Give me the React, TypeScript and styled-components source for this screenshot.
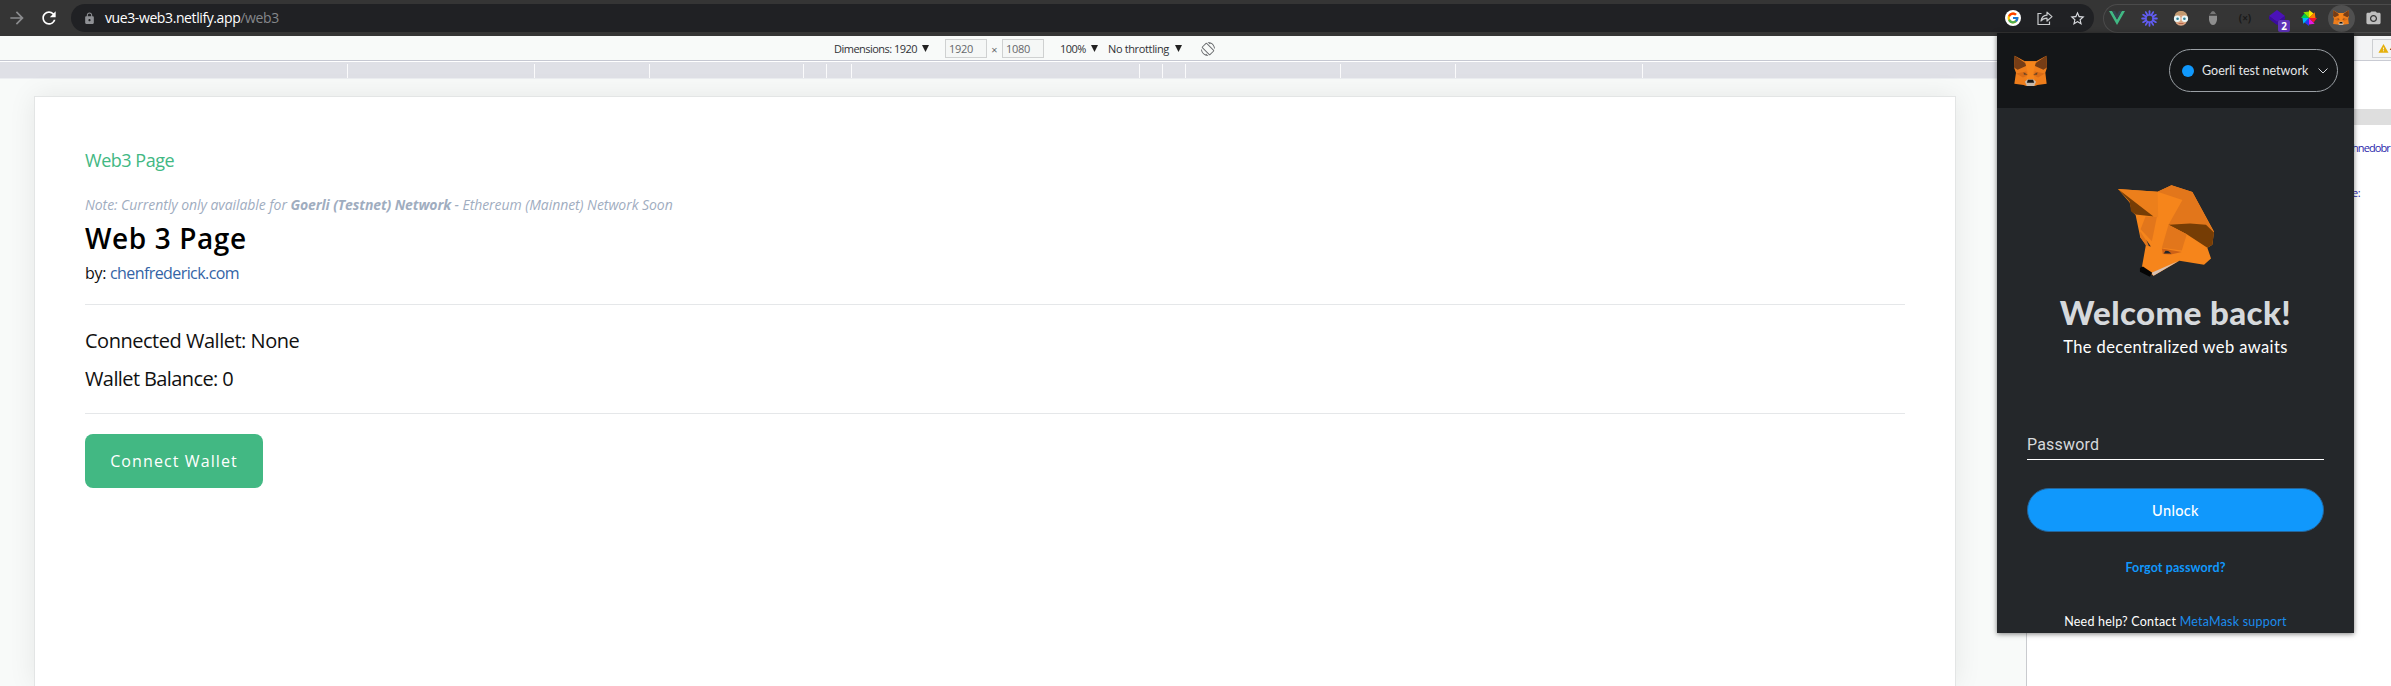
import React from "react";
import styled, { createGlobalStyle } from "styled-components";
import { MdArrowForward, MdRefresh, MdLock, MdStarBorder, MdPhotoCamera, MdScreenRotation, MdWarning } from "react-icons/md";
import { FcGoogle } from "react-icons/fc";

const GlobalStyle = createGlobalStyle`
  *, *::before, *::after { box-sizing: border-box; }
  body { margin: 0; overflow: hidden; background: #fff; font-family: "Open Sans", "Noto Sans", sans-serif; }
  p, h1, h2 { margin: 0; }
  svg { display: block; flex: none; }
`;

const Screen = styled.div`
  position: relative;
  display: flex;
  flex-direction: column;
  width: 2391px;
  height: 686px;
  overflow: hidden;
`;

/* ---------- browser toolbar ---------- */
const BrowserBar = styled.header`
  display: flex;
  align-items: center;
  flex: none;
  height: 36px;
  padding-left: 1px;
  background: #353535;
`;
const IconCell = styled.span<{ $color?: string }>`
  position: relative;
  display: flex;
  align-items: center;
  justify-content: center;
  flex: none;
  width: 32px;
  height: 28px;
  color: ${(p) => p.$color ?? "#dadce0"};
`;
const Omnibox = styled.div`
  display: flex;
  align-items: center;
  width: 2023px;
  height: 28px;
  margin-left: 6px;
  padding: 0 1px 0 12px;
  border-radius: 14px;
  background: #202124;
  color: #8f9195;
`;
const Address = styled.span`
  flex: 1;
  margin-left: 9px;
  font-size: 14px;
  line-height: 28px;
  letter-spacing: -0.4px;
  color: #85878b;
  b { font-weight: 400; color: #fff; }
`;
const Extensions = styled.div`
  display: flex;
  align-items: center;
  flex: 1;
  height: 29px;
  margin-left: 9px;
  border: 1px solid #4b4b4b;
  border-right: 0;
  border-radius: 15px 0 0 15px;
  & > :first-child { margin-left: -3px; }
`;
const ActiveDisc = styled.span`
  display: flex;
  align-items: center;
  justify-content: center;
  flex: none;
  width: 27px;
  height: 27px;
  border-radius: 50%;
  background: #505050;
`;
const Badge = styled.span`
  position: absolute;
  left: 17px;
  top: 16px;
  width: 12px;
  height: 12px;
  border-radius: 2px;
  background: #5f33b8;
  color: #fff;
  font: 700 10px/12px "Open Sans", sans-serif;
  text-align: center;
`;
const Code = styled.span`
  font: 700 10px/12px "Open Sans", sans-serif;
  color: #191919;
`;

/* ---------- emulated device ---------- */
const Workspace = styled.div`
  display: flex;
  flex: 1;
  min-height: 0;
`;
const DevicePane = styled.section`
  display: flex;
  flex-direction: column;
  width: 2026px;
  flex: none;
  overflow: hidden;
  background: #f8faf9;
`;
const DeviceBar = styled.div`
  display: flex;
  align-items: center;
  flex: none;
  height: 25px;
  padding: 1px 0 0 834px;
  border-bottom: 1px solid #c6c8d2;
  font-size: 11px;
  line-height: 18px;
  color: #303236;
  white-space: nowrap;
`;
const BarText = styled.span<{ $w: number; $ls: number; $before?: number }>`
  width: ${(p) => p.$w}px;
  margin-left: ${(p) => p.$before ?? 0}px;
  letter-spacing: ${(p) => p.$ls}px;
`;
const Caret = styled.i<{ $after: number }>`
  width: 7px;
  height: 7px;
  margin-right: ${(p) => p.$after}px;
  background: #222;
  clip-path: polygon(0 0, 100% 0, 50% 100%);
`;
const SizeField = styled.span`
  width: 42px;
  height: 19px;
  padding-left: 3px;
  border: 1px solid #cfd1d1;
  background: #f5f7f6;
  color: #66686b;
  letter-spacing: -0.3px;
  line-height: 17px;
`;
const Times = styled.span`
  width: 15px;
  padding-top: 2px;
  text-align: center;
  color: #66686b;
`;
const Ruler = styled.div`
  display: flex;
  flex: none;
  height: 18px;
  padding-top: 2px;
  border-top: 1px solid #fff;
  border-bottom: 1px solid #eceef1;
  background: #dfe0e6;
`;
const RulerStep = styled.span<{ $w: number }>`
  flex: none;
  width: ${(p) => p.$w}px;
  border-right: 1px solid #fbfbfc;
`;
const Page = styled.main`
  display: flex;
  flex-direction: column;
  align-items: flex-start;
  flex: 1;
  margin: 17px 70px 0 34px;
  padding: 51px 50px 0;
  border: 1px solid #e3e5e5;
  border-bottom: 0;
  background: #fff;
  box-shadow: 0 0 26px rgba(0, 0, 0, 0.08);
`;
const Crumb = styled.p`
  font-size: 18px;
  line-height: 24px;
  letter-spacing: -0.48px;
  color: #42b883;
`;
const Note = styled.p`
  margin-top: 23px;
  font-size: 14px;
  font-style: italic;
  line-height: 20px;
  letter-spacing: -0.06px;
  color: #9fadbf;
  b { letter-spacing: -0.12px; }
`;
const Title = styled.h1`
  margin-top: 3px;
  font-size: 28px;
  font-weight: 600;
  line-height: 40px;
  letter-spacing: 0.6px;
  color: #000;
`;
const Byline = styled.p`
  margin-top: 3px;
  font-size: 16px;
  line-height: 24px;
  letter-spacing: -0.3px;
  color: #111;
`;
const PageLink = styled.a`
  letter-spacing: -0.58px;
  color: #3464a6;
`;
const Rule = styled.hr<{ $top: number; $bottom: number }>`
  width: 100%;
  height: 1px;
  margin: ${(p) => p.$top}px 0 ${(p) => p.$bottom}px;
  border: 0;
  background: #e5e7e9;
`;
const Fact = styled.p<{ $ls: number }>`
  font-size: 20px;
  line-height: 38px;
  letter-spacing: ${(p) => p.$ls}px;
  color: #111;
`;
const ConnectButton = styled.button`
  width: 178px;
  height: 54px;
  padding: 0;
  border: 0;
  border-radius: 8px;
  background: #42b883;
  color: #fff;
  font: 500 16px/54px "Open Sans", sans-serif;
  letter-spacing: 1.1px;
`;

/* ---------- developer tools ---------- */
const DevTools = styled.aside`
  display: flex;
  flex-direction: column;
  align-items: flex-end;
  flex: 1;
  border-left: 1px solid #c9cbcf;
  background: #fff;
  color: #2a27ab;
  font-size: 11px;
  line-height: 16px;
`;
const ToolsTabs = styled.div`
  display: flex;
  align-items: center;
  justify-content: flex-end;
  width: 100%;
  height: 25px;
  border-bottom: 1px solid #c9cbd3;
  background: #f3f4f5;
`;
const IssueChip = styled.span`
  display: flex;
  align-items: center;
  width: 19px;
  height: 19px;
  padding-left: 5px;
  border: 1px solid #cdcfd2;
  border-right: 0;
  color: #e5b00d;
  overflow: hidden;
`;
const IssueCount = styled.span`
  margin-left: 1px;
  color: #222;
`;
const ToolsHeading = styled.div`
  width: 100%;
  height: 16px;
  margin-top: 48px;
  background: #dedede;
`;
const ToolsLine = styled.div<{ $top: number; $ls: number }>`
  width: 39px;
  margin-top: ${(p) => p.$top}px;
  letter-spacing: ${(p) => p.$ls}px;
  white-space: nowrap;
`;

/* ---------- wallet popup ---------- */
const Popup = styled.section`
  position: absolute;
  left: 1997px;
  top: 33px;
  display: flex;
  flex-direction: column;
  width: 357px;
  height: 600px;
  background: #24272a;
  box-shadow: 0 1px 5px rgba(0, 0, 0, 0.5);
  font-family: Lato, sans-serif;
  color: #fff;
`;
const PopupHeader = styled.header`
  display: flex;
  align-items: center;
  justify-content: space-between;
  flex: none;
  height: 75px;
  padding: 0 16px 0 17px;
  background: #141618;
`;
const Network = styled.div`
  display: flex;
  align-items: center;
  width: 169px;
  height: 43px;
  padding-left: 12px;
  border: 1px solid #9ba0a5;
  border-radius: 22px;
  font-size: 12.5px;
  color: #e4e6e8;
`;
const NetworkDot = styled.i`
  width: 12px;
  height: 12px;
  margin-right: 8px;
  border-radius: 50%;
  background: #1098fc;
`;
const NetworkName = styled.span`
  width: 116px;
  line-height: 16px;
  white-space: nowrap;
`;
const PopupBody = styled.div`
  display: flex;
  flex-direction: column;
  align-items: center;
  padding: 0 30px;
`;
const Mascot = styled.svg`
  align-self: flex-start;
  width: 98px;
  height: 93px;
  margin: 77px 0 0 90px;
`;
const Welcome = styled.h2`
  margin-top: 14px;
  font-size: 33px;
  font-weight: 900;
  line-height: 40px;
  letter-spacing: 0.4px;
  color: #d6d9dc;
  white-space: nowrap;
`;
const Tagline = styled.p`
  margin-top: 3px;
  font-size: 16.5px;
  line-height: 24px;
  letter-spacing: 0.4px;
`;
const PasswordField = styled.div`
  width: 100%;
  height: 27px;
  margin-top: 74px;
  border-bottom: 1px solid #fff;
  font: 400 16px/24px Roboto, sans-serif;
  letter-spacing: 0.2px;
  color: #d6d9dc;
`;
const UnlockButton = styled.button`
  width: 297px;
  height: 44px;
  margin-top: 28px;
  padding: 0;
  border: 1px solid #24659b;
  border-radius: 22px;
  background: #1098fc;
  color: #fff;
  font: 500 14.5px/41px Lato, sans-serif;
  letter-spacing: 0.35px;
`;
const Forgot = styled.a`
  margin-top: 26px;
  font-size: 12.5px;
  font-weight: 700;
  line-height: 20px;
  letter-spacing: 0.1px;
  color: #1098fc;
`;
const Help = styled.p`
  margin-top: 34px;
  font-size: 12.5px;
  line-height: 20px;
  letter-spacing: 0.22px;
  a { color: #1b8cec; }
`;

const FoxHead = ({ size }: { size: number }) => (
  <svg width={size} height={size * 0.96} viewBox="161 162 100 96">
    <path d="M163 164L194 181H228L259 164L261 200L256 216L260 249L232 253L224 256H198L190 253L162 249L167 216L161 200Z" fill="#ee7d1b" />
    <path d="M163 164L204 192L172 207L161 200ZM259 164L218 192L250 207L261 200Z" fill="#763d16" />
    <path d="M194 181H228L219 217L224 236H198L203 217Z" fill="#f6851b" />
    <path d="M167 218L198 212L201 224L188 230ZM255 218L224 212L221 224L234 230Z" fill="#d96c17" />
    <path d="M190 214L203 222L191 222ZM232 214L219 222L231 222Z" fill="#6b4526" />
    <path d="M194 243L201 236H221L228 243L222 256H200Z" fill="#c8b9aa" />
    <path d="M203 237H219L222 246H200Z" fill="#161616" />
  </svg>
);

const FoxMascot = () => (
  <Mascot viewBox="470 195 295 280">
    <path d="M473 207L592 215L634 196L697 216L762 335L757 375L742 384L753 416L732 435L658 423L580 468L545 442L557 375L540 352L526 285L515 275L508 248Z" fill="#f6851b" />
    <path d="M473 207L592 215L594 292L580 290Z" fill="#ec7f1b" />
    <path d="M473 207L580 290L526 284L512 274L508 245Z" fill="#763d05" />
    <path d="M592 215L634 196L697 216L762 338L738 315L625 315L667 240Z" fill="#e2761b" />
    <path d="M625 315L690 311L738 315L762 338L757 375L742 384L680 343Z" fill="#763d05" />
    <path d="M625 315L680 343L665 392L605 384Z" fill="#e2761b" />
    <path d="M556 290L590 291L575 364L541 328Z" fill="#e2761b" />
    <path d="M540 335L558 362L572 382L557 377L540 352Z" fill="#e2761b" />
    <path d="M558 360L572 380L566 379Z" fill="#24272a" />
    <path d="M605 386L665 397L632 404L608 403Z" fill="#cd6116" />
    <path d="M611 401L616 393L624 394L634 401Z" fill="#24272a" />
    <path d="M574 459L655 424L580 468Z" fill="#d7c1b3" />
    <path d="M539 445L548 440L576 459L569 471L539 456Z" fill="#050505" />
  </Mascot>
);

const rulerSteps = [348, 187, 115, 154, 23, 25, 288, 23, 23, 155, 115, 187];

export default function App() {
  return (
    <Screen>
      <GlobalStyle />
      <BrowserBar>
        <IconCell $color="#8b8c8e"><MdArrowForward size={20} /></IconCell>
        <IconCell $color="#fff"><MdRefresh size={20} /></IconCell>
        <Omnibox>
          <MdLock size={13} />
          <Address><b>vue3-web3.netlify.app</b>/web3</Address>
          <IconCell>
            <svg width="16" height="16" viewBox="0 0 16 16"><circle cx="8" cy="8" r="8" fill="#fff" /><FcGoogle x="1.500" y="1.500" size={13} /></svg>
          </IconCell>
          <IconCell>
            <svg width="16" height="16" viewBox="0 0 16 16" fill="none" stroke="#c8cacc" strokeWidth="1.200">
              <path d="M4.500 3.500H1V14.500H12.500V11.500" />
              <path d="M4 11C4.500 7.500 6.500 5.500 10 5.200V2.200L15 6.600L10 11V8.200C7.300 8.200 5.500 9 4 11Z" strokeLinejoin="round" />
            </svg>
          </IconCell>
          <IconCell><MdStarBorder size={17} /></IconCell>
        </Omnibox>
        <Extensions>
          <IconCell>
            <svg width="16" height="14" viewBox="0 0 16 14"><path d="M0 0H3.200L8 8.500L12.800 0H16L8 14Z" fill="#41b883" /><path d="M3.200 0H6L8 3.600L10 0H12.800L8 8.500Z" fill="#34424e" /></svg>
          </IconCell>
          <IconCell>
            <svg width="17" height="17" viewBox="-9 -9 18 18" stroke="#625df5" strokeWidth="1.900" strokeLinecap="round">
              {Array.from({ length: 12 }, (_, i) => <path key={i} d="M0 -4V-7.800" transform={`rotate(${i * 30})`} />)}
              <circle r="3.800" fill="none" strokeWidth="1.500" />
            </svg>
          </IconCell>
          <IconCell>
            <svg width="16" height="15" viewBox="0 0 16 15">
              <ellipse cx="8" cy="7.500" rx="6.500" ry="7.300" fill="#d9a684" />
              <path d="M1.500 6C2 1.500 5 0 8 0S14 1.500 14.500 6L11 4H5Z" fill="#c39a70" />
              <circle cx="4.200" cy="7.700" r="3.300" fill="#e9f6f7" /><circle cx="11.800" cy="7.700" r="3.300" fill="#e9f6f7" />
              <circle cx="4.600" cy="7.800" r="1.300" fill="#2e7f95" /><circle cx="11.400" cy="7.800" r="1.300" fill="#2e7f95" />
              <path d="M5.500 12.500H10.500" stroke="#b8664c" />
            </svg>
          </IconCell>
          <IconCell>
            <svg width="8" height="14" viewBox="0 0 8 14"><path d="M1 3Q4 -3 7 3Z" fill="#777" /><path d="M0 4.500H8V9Q7 14 4 14T0 9Z" fill="#8e8e8e" /><path d="M0 3.500H8V5H0Z" fill="#4e4e4e" /></svg>
          </IconCell>
          <IconCell><Code>(×)</Code></IconCell>
          <IconCell>
            <svg width="18" height="16" viewBox="0 0 18 16"><path d="M9 0L17 6L9 12L1 6Z" fill="#4b12b8" /><path d="M1 6L9 12L17 6V9L9 15L1 9Z" fill="#3a0ba0" /></svg>
            <Badge>2</Badge>
          </IconCell>
          <IconCell>
            <svg width="16" height="16" viewBox="-8 -8 16 16">
              {["#ffe600", "#ff7a00", "#f0142f", "#e21ae0", "#2b35f0", "#00b7ff", "#00cf4b", "#8fe000"].map((c, i) => (
                <path key={c} d="M0 0L0 -8L4.600 -4.600Z" fill={c} transform={`rotate(${i * 45})`} />
              ))}
            </svg>
          </IconCell>
          <IconCell><ActiveDisc><FoxHead size={16} /></ActiveDisc></IconCell>
          <IconCell $color="#bfbfbf"><MdPhotoCamera size={17} /></IconCell>
        </Extensions>
      </BrowserBar>

      <Workspace>
        <DevicePane>
          <DeviceBar>
            <BarText $w={88} $ls={-0.52}>Dimensions: 1920</BarText>
            <Caret $after={16} />
            <SizeField>1920</SizeField>
            <Times>×</Times>
            <SizeField>1080</SizeField>
            <BarText $w={31} $ls={-0.5} $before={16}>100%</BarText>
            <Caret $after={10} />
            <BarText $w={67} $ls={-0.36}>No throttling</BarText>
            <Caret $after={19} />
            <MdScreenRotation size={14} color="#66686b" />
          </DeviceBar>
          <Ruler>{rulerSteps.map((w, i) => <RulerStep key={i} $w={w} />)}</Ruler>
          <Page>
            <Crumb>Web3 Page</Crumb>
            <Note>Note: Currently only available for <b>Goerli (Testnet) Network</b> - Ethereum (Mainnet) Network Soon</Note>
            <Title>Web 3 Page</Title>
            <Byline>by: <PageLink>chenfrederick.com</PageLink></Byline>
            <Rule $top={19} $bottom={17} />
            <Fact $ls={-0.48}>Connected Wallet: None</Fact>
            <Fact $ls={-0.6}>Wallet Balance: 0</Fact>
            <Rule $top={15} $bottom={20} />
            <ConnectButton>Connect Wallet</ConnectButton>
          </Page>
        </DevicePane>
        <DevTools>
          <ToolsTabs><IssueChip><MdWarning size={11} /><IssueCount>4</IssueCount></IssueChip></ToolsTabs>
          <ToolsHeading />
          <ToolsLine $top={15} $ls={-0.9}>hnedobr</ToolsLine>
          <ToolsLine $top={29} $ls={-0.5}>e:</ToolsLine>
        </DevTools>
      </Workspace>

      <Popup>
        <PopupHeader>
          <FoxHead size={33} />
          <Network>
            <NetworkDot />
            <NetworkName>Goerli test network</NetworkName>
            <svg width="10" height="6" viewBox="0 0 10 6" fill="none" stroke="#d6d9dc"><path d="M0.500 0.500L5 5L9.500 0.500" /></svg>
          </Network>
        </PopupHeader>
        <PopupBody>
          <FoxMascot />
          <Welcome>Welcome back!</Welcome>
          <Tagline>The decentralized web awaits</Tagline>
          <PasswordField>Password</PasswordField>
          <UnlockButton>Unlock</UnlockButton>
          <Forgot>Forgot password?</Forgot>
          <Help>Need help? Contact <a>MetaMask support</a></Help>
        </PopupBody>
      </Popup>
    </Screen>
  );
}
